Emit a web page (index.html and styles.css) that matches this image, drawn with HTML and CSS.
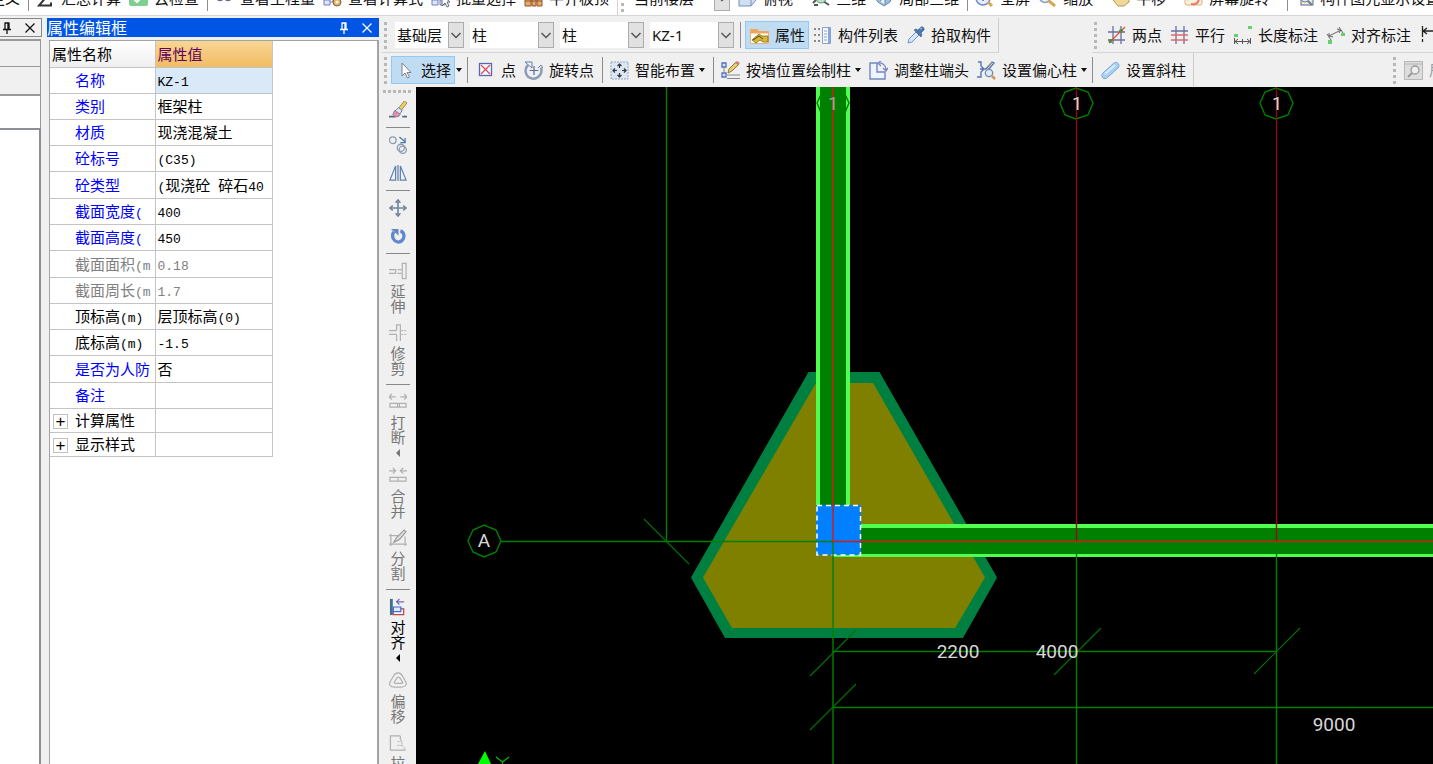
FILE: index.html
```html
<!DOCTYPE html>
<html lang="zh-CN">
<head>
<meta charset="utf-8">
<title>属性编辑框</title>
<link rel="stylesheet" href="styles.css">
</head>
<body>
<svg class="sprite" aria-hidden="true">
  <symbol id="i-sum" viewBox="0 0 19 19"><path d="M14 5V3H4l5 6.500-6 7h12v-3" fill="none" stroke="#333" stroke-width="2"/></symbol>
  <symbol id="i-cloud" viewBox="0 0 19 19"><rect width="19" height="17" rx="2" fill="#7fd08f"/><path d="M5 10l3 3 6-6" fill="none" stroke="#fff" stroke-width="2"/></symbol>
  <symbol id="i-glasses" viewBox="0 0 19 19"><g fill="#dfe8f4" stroke="#5f7196" stroke-width="1.500"><circle cx="5" cy="8" r="3.500"/><circle cx="13" cy="8" r="3.500"/></g></symbol>
  <symbol id="i-flow" viewBox="0 0 19 19"><path d="M1 1h6v6H1zM1 11h6v5H1z" fill="#dfe6f8" stroke="#6f80c0"/><path d="M7 13h5M10 5v8" stroke="#6f80c0"/><circle cx="14" cy="13" r="4" fill="#e8b060" stroke="#806040"/><circle cx="14" cy="13" r="1.500" fill="#fff"/></symbol>
  <symbol id="i-batch" viewBox="0 0 19 19"><path d="M1 1h6v6H1zM1 11h6v5H1zM9 11h5v5H9z" fill="#dfe6f8" stroke="#6f80c0"/><path d="M11 6v11l3-3 2 4 2-1-2-4h3z" fill="#fff" stroke="#667"/></symbol>
  <symbol id="i-slab" viewBox="0 0 19 19"><path d="M1 7h6v10H1zM8 4h4v13H8zM13 8h5v9h-5z" fill="#e0b060" stroke="#985038"/><path d="M1 12h17" stroke="#985038"/></symbol>
  <symbol id="i-cube" viewBox="0 0 19 19"><path d="M1 6l5-5h12v10l-5 6H1z" fill="#cfe0f4" stroke="#7890b8"/><path d="M1 6h12v11M13 6l5-5" fill="none" stroke="#7890b8"/></symbol>
  <symbol id="i-orbit" viewBox="0 0 19 19"><path d="M2 14l5-5M3 16h4M12 12l6 4" stroke="#555" stroke-width="2"/><circle cx="10" cy="9" r="5" fill="#bfe0d0" stroke="#58906c"/></symbol>
  <symbol id="i-part" viewBox="0 0 19 19"><path d="M1 9l8-6 9 4-2 6-6 4-6-4z" fill="#9cc0dc" stroke="#6788a8"/><path d="M6 12l5-4v8" fill="#e8f2f8" stroke="#6788a8"/></symbol>
  <symbol id="i-full" viewBox="0 0 19 19"><circle cx="8" cy="9" r="7" fill="#e4edfa" stroke="#7188bd" stroke-width="1.500"/><path d="M5 9h6M8 6v6" stroke="#7188bd" stroke-width="2"/><path d="M13 13l4 4" stroke="#d8a850" stroke-width="3"/></symbol>
  <symbol id="i-zoom" viewBox="0 0 19 19"><circle cx="7" cy="8" r="5.500" fill="#edf2f8" stroke="#90a0b8" stroke-width="1.500"/><path d="M11 12l6 5" stroke="#d8a850" stroke-width="3"/></symbol>
  <symbol id="i-hand" viewBox="0 0 19 19"><path d="M2 11l4-1V2h9l3 4v7l-5 4H7z" fill="#f0d898" stroke="#b89858"/></symbol>
  <symbol id="i-screen" viewBox="0 0 19 19"><rect x="1" y="2" width="17" height="14" rx="2" fill="#fff0d8" stroke="#d8b078"/><path d="M1 5l6 2-3 5z" fill="#73b9e8"/><path d="M7 14c6 1 7-2 7-6l-3 1 4-5 3 5-2-1c0 7-4 9-9 8z" fill="#e87870"/></symbol>
  <symbol id="i-show" viewBox="0 0 19 19"><rect x="6" y="4" width="12" height="12" fill="#f6e9c9" stroke="#55699a"/><circle cx="10" cy="9" r="4" fill="#e3edf8" stroke="#667da6"/><path d="M1 10h5M13 12l4 4" stroke="#667da6" stroke-width="2"/></symbol>

  <symbol id="i-pin" viewBox="0 0 12 12"><path d="M3.500 1h5M4 1v6M8 1v6M7 1v6M2 7.500h8M6 8v4" stroke="currentColor" stroke-width="1.300" fill="none"/></symbol>
  <symbol id="i-close" viewBox="0 0 12 12"><path d="M1.500 1.500l9 9M10.500 1.500l-9 9" stroke="currentColor" stroke-width="1.200" fill="none"/></symbol>
  <symbol id="i-chev" viewBox="0 0 12 12"><path d="M1.500 4L6 8.500 10.500 4" stroke="#555" stroke-width="1.500" fill="none"/></symbol>

  <symbol id="i-prop" viewBox="0 0 19 19"><path d="M.5 3.500h7l1 2h10v12H.5z" fill="#fff" stroke="#e8b078"/><path d="M.5 3h7l1 2h10v2.500H.5z" fill="#f0a858"/><path d="M2 14l7-6 3 2h6v6h-5l-3-2-4 3z" fill="#d8b838" stroke="#806818" stroke-width=".8"/><path d="M3 14l6-4 4 3" fill="none" stroke="#54440c"/></symbol>
  <symbol id="i-list" viewBox="0 0 19 19"><path d="M9.500 1.500h8v16h-8z" fill="#f4f8ff" stroke="#8aa0d0"/><path d="M15 2h2.500v15H15z" fill="#89a5d8"/><path d="M11 5h3M11 8h3M11 11h3M11 14h3" stroke="#8fa0c0"/><path d="M1 3h2M5 3h2M1 9h2M5 9h2M1 15h2M5 15h2" stroke="#888" stroke-width="2"/></symbol>
  <symbol id="i-drop" viewBox="0 0 19 19"><path d="M2 17l1-4 7-7 3 3-7 7z" fill="#d8e8fb" stroke="#7090c8"/><path d="M8 4l7 7 1-2-1-2 3-3c1-2-2-4-3-3l-3 3-2-1z" fill="#4b78ac" stroke="#375f94" stroke-width=".6"/><path d="M14 3l2-1" stroke="#a8c8e8"/></symbol>
  <symbol id="i-two" viewBox="0 0 19 19"><path d="M6 0v18M14 0v18M1 6h17M1 14h17" stroke="#6870a0" stroke-width="1.300"/><path d="M2 17L18 1" stroke="#e84840" stroke-width="1.300"/><circle cx="3.500" cy="15" r="2" fill="#60883c"/><circle cx="14" cy="5" r="2" fill="#60883c"/></symbol>
  <symbol id="i-par" viewBox="0 0 19 19"><path d="M6 0v18M14 0v18M1 5h17" stroke="#6870a0" stroke-width="1.300"/><path d="M1 9h17M1 14h17" stroke="#e06868" stroke-width="1.300"/></symbol>
  <symbol id="i-len" viewBox="0 0 19 19"><path d="M1 8h4v3H1zM15 0h4v3h-4z" fill="#68d068"/><path d="M1.500 12v6M17.500 12v6M2 15.500h15M5 13l-3 2.500L5 18M14 13l3 2.500-3 2.500M9.500 13v5" fill="none" stroke="#555"/></symbol>
  <symbol id="i-ali" viewBox="0 0 19 19"><path d="M2 14h4v4H2zM15 7h4v3h-4z" fill="#68d068"/><path d="M1 8l4 6M13 1l4 6M3 10l12-6M3 7v3l4 1M11 3l4 1-2 3" fill="none" stroke="#666"/></symbol>
  <symbol id="i-dim" viewBox="0 0 19 19"><path d="M3.500 0v11M3.500 13v3M4 5h15M8 2L4 5l4 3" fill="none" stroke="#222" stroke-width="1.300"/></symbol>

  <symbol id="i-cursor" viewBox="0 0 19 19"><path d="M6 2v13l3-3 2.500 5 2-1-2.500-4.500h4z" fill="#fff" stroke="#7c8088"/></symbol>
  <symbol id="i-point" viewBox="0 0 19 19"><rect x="3.500" y="2.500" width="12" height="12" fill="#f5f7ff" stroke="#5868b0" stroke-width="1.300"/><path d="M5 4l9 9M14 4l-9 9" stroke="#d85050" stroke-width="1.300"/></symbol>
  <symbol id="i-rotpt" viewBox="0 0 19 19"><path d="M4 4C0 8 1 16 8 17.500c6 1 11-5 9-11" fill="none" stroke="#8c9cb8" stroke-width="2.500"/><path d="M1 1h7v6z" fill="#eef4ff" stroke="#667ca6"/><path d="M10 5v9M5.500 9.500h9" stroke="#566c96" stroke-width="1.200"/><path d="M14 7l3-3 2 3" fill="none" stroke="#667ca6"/></symbol>
  <symbol id="i-smart" viewBox="0 0 19 19"><rect x="1" y="1" width="17" height="17" fill="#dce7f4" stroke="#90a4c0" stroke-dasharray="2 1"/><path d="M9.500 3v4M9.500 12v4M3 9.500h4M12 9.500h4M7.500 5l2-2 2 2M7.500 14l2 2 2-2M5 7.500l-2 2 2 2M14 7.500l2 2-2 2" fill="none" stroke="#333" stroke-width="1.200"/></symbol>
  <symbol id="i-wall" viewBox="0 0 19 19"><path d="M1 2h4v4H1zM1 12h4v4H1z" fill="#dce8ff" stroke="#5070c0" stroke-width="1.300"/><path d="M3 6v6M6 14h13M6 17.500h13" stroke="#888"/><path d="M7 12l1-4 7-7 3 2-7 7z" fill="#e8d070" stroke="#8a7840"/><path d="M14 2l2-2 3 2-2 2z" fill="#cf8070"/></symbol>
  <symbol id="i-end" viewBox="0 0 19 19"><path d="M1 2h7v9h8v7H1z" fill="#eef4ff" stroke="#7088c0" stroke-width="1.400"/><path d="M9 2c5-1 8 3 8 7M12 0L9 2l3 3M14 7l3 3 2-3" fill="none" stroke="#8088c8" stroke-width="1.400"/></symbol>
  <symbol id="i-ecc" viewBox="0 0 19 19"><path d="M1 1h3v4l3 3-3 3v5H0M9 8l6-7 2 1-6 7M3 8h6" fill="none" stroke="#5078b8" stroke-width="1.400"/><path d="M9 7l6-6" stroke="#c09050"/><circle cx="12" cy="12" r="3.700" fill="#dceafa" stroke="#758aa8" stroke-width="1.300"/><path d="M15 15l3 3" stroke="#d09850" stroke-width="2.500"/></symbol>
  <symbol id="i-slant" viewBox="0 0 19 19"><path d="M2 17c-2-2-1-4 0-5L13 2c2-2 7 1 4 5L7 16c-2 2-4 2-5 1z" fill="#a8d0f4" stroke="#78a4d4"/><path d="M4 13L14 4" stroke="#d8ecff" stroke-width="2"/></symbol>
  <symbol id="i-find" viewBox="0 0 19 19"><rect x=".5" y=".5" width="18" height="18" fill="#ddd" stroke="#b8b8b8"/><path d="M1 3h17" stroke="#b8b8b8"/><circle cx="11" cy="9" r="4" fill="#eee" stroke="#999" stroke-width="1.300"/><path d="M8 12l-4 4" stroke="#999" stroke-width="2"/></symbol>

  <symbol id="v-brush" viewBox="0 0 19 19"><path d="M0 16.500h7M14 16.500h5" stroke="#50688c" stroke-width="2"/><path d="M9 9l7-9 3 2-7 9z" fill="#f0d060" stroke="#807050" stroke-width=".8"/><path d="M6 11l4-4 4 3-3 4z" fill="#dde6f2" stroke="#6080a0"/><path d="M6 10l6 4-2 2.500H6L4 14z" fill="#e090b0" stroke="#906880" stroke-width=".8"/></symbol>
  <symbol id="v-copy" viewBox="0 0 19 19"><g fill="none" stroke="#8c9cb4" stroke-width="1.400"><circle cx="4" cy="4.500" r="3.500"/><circle cx="12.500" cy="12.500" r="3.800"/><circle cx="14.500" cy="14.500" r="3.800"/></g><path d="M11 1l6 5M17 2v5h-5" fill="none" stroke="#4878b0" stroke-width="1.300"/></symbol>
  <symbol id="v-mirror" viewBox="0 0 19 19"><path d="M7 2v15H1zM12 2v15h6z" fill="#edf3fc" stroke="#6080b0" stroke-width="1.300"/><path d="M9.500 1v17" stroke="#6080b0" stroke-width="1.300"/></symbol>
  <symbol id="v-move" viewBox="0 0 19 19"><path d="M9.500 1v17M1 9.500h17M7 4l2.500-3L12 4M7 15l2.500 3 2.500-3M4 7L1 9.500 4 12M15 7l3 2.500-3 2.500" fill="none" stroke="#6f87a3" stroke-width="1.700"/></symbol>
  <symbol id="v-rotate" viewBox="0 0 19 19"><path d="M12 4c4 1 5 7 2 10-5 5-13-1-9-9" fill="none" stroke="#6088cc" stroke-width="3.500"/><path d="M2 2h8v7z" fill="#6088cc"/></symbol>
  <symbol id="v-extend" viewBox="0 0 19 19"><path d="M14 1.500h4v16h-4zM0 8h7v4H0M9 8h4M9 12h4" fill="none" stroke="#b0b0b0" stroke-width="1.300"/></symbol>
  <symbol id="v-trim" viewBox="0 0 19 19"><path d="M8 7V1h4v17M8 11v7M0 7h8M0 11h8" fill="none" stroke="#b0b0b0" stroke-width="1.300"/><path d="M13 7h6M13 11h6" stroke="#aaa" stroke-dasharray="2 1"/></symbol>
  <symbol id="v-break" viewBox="0 0 19 19"><path d="M0 4h7M3 1L0 4l3 3M12 4h7M16 1l3 3-3 3M1 11h17v4H1zM9 11v4M11 11v4" fill="none" stroke="#b0b0b0" stroke-width="1.300"/></symbol>
  <symbol id="v-merge" viewBox="0 0 19 19"><path d="M0 4h7M4 1l3 3-3 3M12 4h7M15 1l-3 3 3 3M1 11h17v4H1zM9.500 11v4" fill="none" stroke="#b0b0b0" stroke-width="1.300"/></symbol>
  <symbol id="v-split" viewBox="0 0 19 19"><path d="M2 5v13M17 8v10M0 7h10M0 16h19" fill="none" stroke="#b0b0b0" stroke-width="1.300"/><path d="M5 14l3-5 8-8 2 2-7 8z" fill="#ddd" stroke="#999" stroke-width="1.200"/></symbol>
  <symbol id="v-align" viewBox="0 0 19 19"><path d="M1 1h3v17H1z" fill="#40708c"/><path d="M8 4h8M11 1L8 4l3 3" stroke="#7868b8" fill="none" stroke-width="1.300"/><path d="M4.500 11.500h11v6h-11z" fill="#fff" stroke="#b04848" stroke-width="1.300"/><path d="M4.500 9.500h8v5h-8z" fill="#e2eaff" stroke="#4068d8" stroke-width="1.300"/></symbol>
  <symbol id="v-offset" viewBox="0 0 19 19"><path d="M5 4c2-4 7-4 9 0l3 5c3 4 0 7-4 7H6c-5 0-7-3-4-7zM8 7c1-2 3-2 4 0l2 3c1 2 0 2-2 2H8c-3 0-3 0-2-2z" fill="none" stroke="#b0b0b0" stroke-width="1.300"/></symbol>
  <symbol id="v-stretch" viewBox="0 0 19 19"><path d="M12 2H1.500v15h16M12 2v4" fill="none" stroke="#b0b0b0" stroke-width="1.300"/><path d="M9 8h4M9 12h5M13 6l1 6 4 5" fill="none" stroke="#aaa" stroke-dasharray="2 1"/></symbol>
</svg>

<div class="app">
  <header class="menu-strip">
    <div class="menu-row">
      <button class="item cut-left">定义</button>
      <span class="sep"></span>
      <button class="item"><svg class="icon"><use href="#i-sum"/></svg>汇总计算</button>
      <button class="item"><svg class="icon"><use href="#i-cloud"/></svg>云检查</button>
      <span class="sep"></span>
      <button class="item"><svg class="icon"><use href="#i-glasses"/></svg>查看工程量</button>
      <button class="item"><svg class="icon"><use href="#i-flow"/></svg>查看计算式</button>
      <button class="item"><svg class="icon"><use href="#i-batch"/></svg>批量选择</button>
      <button class="item"><svg class="icon"><use href="#i-slab"/></svg>平齐板顶</button>
      <span class="edge"></span>
      <span class="grip"></span>
      <label class="combo floor"><select aria-label="楼层范围"><option>当前楼层</option></select><span class="combo-btn"><svg><use href="#i-chev"/></svg></span></label>
      <button class="item"><svg class="icon"><use href="#i-cube"/></svg>俯视<i class="caret"></i></button>
      <button class="item"><svg class="icon"><use href="#i-orbit"/></svg>三维</button>
      <button class="item"><svg class="icon"><use href="#i-part"/></svg>局部三维</button>
      <span class="sep"></span>
      <button class="item"><svg class="icon"><use href="#i-full"/></svg>全屏</button>
      <button class="item"><svg class="icon"><use href="#i-zoom"/></svg>缩放<i class="caret"></i></button>
      <button class="item"><svg class="icon"><use href="#i-hand"/></svg>平移<i class="caret"></i></button>
      <button class="item"><svg class="icon"><use href="#i-screen"/></svg>屏幕旋转<i class="caret"></i></button>
      <span class="sep"></span>
      <button class="item"><svg class="icon"><use href="#i-show"/></svg>构件图元显示设置</button>
    </div>
  </header>

  <div class="body">
    <aside class="dock">
      <div class="dock-title"><svg><use href="#i-pin"/></svg><svg><use href="#i-close"/></svg></div>
      <div class="dock-tab"></div>
      <div class="dock-tab"></div>
      <div class="dock-search"></div>
      <div class="dock-tree"></div>
    </aside>

    <section class="panel">
      <div class="panel-title">
        <h1>属性编辑框</h1>
        <button aria-label="固定"><svg><use href="#i-pin"/></svg></button>
        <button aria-label="关闭"><svg><use href="#i-close"/></svg></button>
      </div>
      <div class="panel-body">
        <table class="props">
          <thead><tr><th>属性名称</th><th class="value-head">属性值</th></tr></thead>
          <tbody>
            <tr class="selected"><th>名称</th><td><span class="mono">KZ-1</span></td></tr>
            <tr><th>类别</th><td>框架柱</td></tr>
            <tr><th>材质</th><td>现浇混凝土</td></tr>
            <tr><th>砼标号</th><td><span class="mono">(C35)</span></td></tr>
            <tr class="tall"><th>砼类型</th><td><span class="mono">(</span>现浇砼<span class="mono"> </span>碎石<span class="mono">40</span></td></tr>
            <tr><th>截面宽度<span class="mono">(</span></th><td><span class="mono">400</span></td></tr>
            <tr><th>截面高度<span class="mono">(</span></th><td><span class="mono">450</span></td></tr>
            <tr class="readonly tall"><th>截面面积<span class="mono">(m</span></th><td><span class="mono">0.18</span></td></tr>
            <tr class="readonly"><th>截面周长<span class="mono">(m</span></th><td><span class="mono">1.7</span></td></tr>
            <tr class="plain"><th>顶标高<span class="mono">(m)</span></th><td>层顶标高<span class="mono">(0)</span></td></tr>
            <tr class="plain"><th>底标高<span class="mono">(m)</span></th><td><span class="mono">-1.5</span></td></tr>
            <tr class="tall"><th>是否为人防</th><td>否</td></tr>
            <tr><th>备注</th><td></td></tr>
            <tr class="group"><th><button class="plus" aria-label="展开计算属性">+</button>计算属性</th><td></td></tr>
            <tr class="group"><th><button class="plus" aria-label="展开显示样式">+</button>显示样式</th><td></td></tr>
          </tbody>
        </table>
      </div>
    </section>

    <main class="work">
      <div class="bar-row">
        <div class="bar">
          <span class="grip"></span>
          <label class="combo short"><select aria-label="楼层"><option>基础层</option></select><span class="combo-btn"><svg><use href="#i-chev"/></svg></span></label>
          <label class="combo"><select aria-label="构件类别"><option>柱</option></select><span class="combo-btn"><svg><use href="#i-chev"/></svg></span></label>
          <label class="combo"><select aria-label="构件类型"><option>柱</option></select><span class="combo-btn"><svg><use href="#i-chev"/></svg></span></label>
          <label class="combo"><select aria-label="构件名称"><option>KZ-1</option></select><span class="combo-btn"><svg><use href="#i-chev"/></svg></span></label>
          <span class="sep tight"></span>
          <button class="item on"><svg class="icon"><use href="#i-prop"/></svg>属性</button>
          <button class="item first"><svg class="icon"><use href="#i-list"/></svg>构件列表</button>
          <button class="item"><svg class="icon"><use href="#i-drop"/></svg>拾取构件</button>
        </div>
        <div class="bar right axis">
          <span class="grip"></span>
          <button class="item wide"><svg class="icon"><use href="#i-two"/></svg>两点</button>
          <button class="item"><svg class="icon"><use href="#i-par"/></svg>平行</button>
          <button class="item"><svg class="icon"><use href="#i-len"/></svg>长度标注</button>
          <button class="item"><svg class="icon"><use href="#i-ali"/></svg>对齐标注</button>
          <button class="item" aria-label="标注"><svg class="icon"><use href="#i-dim"/></svg></button>
        </div>
      </div>
      <div class="bar-row">
        <div class="bar">
          <span class="grip"></span>
          <button class="item on"><svg class="icon"><use href="#i-cursor"/></svg>选择</button><i class="caret flush"></i>
          <span class="sep near"></span>
          <button class="item"><svg class="icon"><use href="#i-point"/></svg>点</button>
          <button class="item"><svg class="icon"><use href="#i-rotpt"/></svg>旋转点</button>
          <span class="sep"></span>
          <button class="item"><svg class="icon"><use href="#i-smart"/></svg>智能布置<i class="caret"></i></button>
          <span class="sep"></span>
          <button class="item"><svg class="icon"><use href="#i-wall"/></svg>按墙位置绘制柱<i class="caret"></i></button>
          <button class="item"><svg class="icon"><use href="#i-end"/></svg>调整柱端头</button>
          <button class="item"><svg class="icon"><use href="#i-ecc"/></svg>设置偏心柱<i class="caret"></i></button>
          <span class="sep near"></span>
          <button class="item"><svg class="icon"><use href="#i-slant"/></svg>设置斜柱</button>
        </div>
        <div class="bar right edit">
          <span class="grip"></span>
          <button class="item off"><svg class="icon"><use href="#i-find"/></svg>局</button>
        </div>
      </div>

      <div class="stage">
        <nav class="vbar">
          <span class="hgrip"></span>
          <button class="tool" aria-label="删除"><svg><use href="#v-brush"/></svg></button>
          <hr>
          <button class="tool" aria-label="复制"><svg><use href="#v-copy"/></svg></button>
          <button class="tool" aria-label="镜像"><svg><use href="#v-mirror"/></svg></button>
          <hr>
          <button class="tool" aria-label="移动"><svg><use href="#v-move"/></svg></button>
          <button class="tool" aria-label="旋转"><svg><use href="#v-rotate"/></svg></button>
          <hr>
          <button class="tool"><svg><use href="#v-extend"/></svg><span>延伸</span></button>
          <button class="tool"><svg><use href="#v-trim"/></svg><span>修剪</span></button>
          <hr>
          <button class="tool"><svg><use href="#v-break"/></svg><span>打断</span><i class="side"></i></button>
          <button class="tool"><svg><use href="#v-merge"/></svg><span>合并</span></button>
          <button class="tool"><svg><use href="#v-split"/></svg><span>分割</span></button>
          <hr>
          <button class="tool live"><svg><use href="#v-align"/></svg><span>对齐</span><i class="side"></i></button>
          <button class="tool"><svg><use href="#v-offset"/></svg><span>偏移</span></button>
          <button class="tool"><svg><use href="#v-stretch"/></svg><span>拉伸</span></button>
        </nav>
        <div class="canvas">
          <svg viewBox="416 87 1017 677" preserveAspectRatio="xMinYMin slice" role="img" aria-label="绘图区">
            <!-- footing -->
            <path d="M808.500 372h71L997 577.500 963 638H725l-34-60.500z" fill="#008040"/>
            <path d="M816 383h57L985 577.500 955 628H732l-29-50.500z" fill="#808000"/>
            <!-- axis bubbles -->
            <path class="axis-line" d="M1060 103l5-11 11-4 12 4 5 11-5 12-12 4-11-4zM1260 103l5-11 11-4 12 4 5 11-5 12-12 4-11-4zM468 541l5-11 11-5 12 5 5 11-5 11-12 5-11-5z"/>
            <!-- beams -->
            <path d="M816 87h34v430h-34z" fill="#50ff50"/><path d="M820 87h26v430h-26z" fill="#008000"/>
            <path d="M833 524h600v33H833z" fill="#50ff50"/><path d="M833 528h600v26H833z" fill="#008000"/>
            <path class="axis-line" d="M817 103l5-11 11-4 11 4 5 11-5 12-11 4-11-4z"/>
            <!-- column -->
            <path d="M816 505h45v50h-45z" fill="#0080ff"/>
            <path d="M817 505.500h43.500v49.500H817z" fill="none" stroke="#fff" stroke-width="1.500" stroke-dasharray="5 4"/>
            <!-- axes -->
            <path class="axis-line" d="M666.500 87v454M501 541.500h332M1076.500 541v223M1276.500 541v223M833 651.500h443M833 707.500h600M833 541v223"/>
            <path class="tick" d="M644 519l45 45M810 676l46-46M810 730l46-46M1054 675l47-47M1254 674l46-46"/>
            <path class="red-dim" d="M1076.500 87v454M1276.500 87v454"/>
            <path class="red-axis" d="M833 87v454.500h600"/>
            <g class="cad-text">
              <text x="833" y="110" class="mark dim">1</text>
              <text x="1077" y="110" class="mark">1</text>
              <text x="1277" y="110" class="mark">1</text>
              <text x="484" y="547">A</text>
              <text x="958" y="658">2200</text>
              <text x="1057" y="658">4000</text>
              <text x="1334" y="731">9000</text>
            </g>
            <!-- coordinate mark -->
            <path d="M485 751l6 13h-13z" fill="#0f0"/>
            <path d="M496 757l6.500 5 6.500-5M502.500 762v4" fill="none" stroke="#00c000" stroke-width="1.200"/>
          </svg>
        </div>
      </div>
    </main>
  </div>
</div>
</body>
</html>
```

FILE: styles.css
```css
* { box-sizing: border-box; }

body {
  margin: 0;
  background: #f0f0f0;
  color: #111;
  font: 15px/20px "Noto Sans", "Noto Sans CJK SC", sans-serif;
}

button, select {
  margin: 0;
  padding: 0;
  border: 0;
  background: none;
  color: inherit;
  font: inherit;
}

.sprite { position: absolute; width: 0; height: 0; }

.app {
  display: flex;
  flex-direction: column;
  height: 100vh;
  overflow: hidden;
}

/* menu strip, scrolled partly out of view */
.menu-strip {
  display: flex;
  flex: none;
  flex-direction: column;
  justify-content: flex-end;
  height: 16px;
  overflow: hidden;
  background: #fff;
  border-bottom: 1px solid #d4d4d4;
}
.menu-row {
  display: flex;
  flex: none;
  align-items: center;
  height: 34px;
}

.item {
  display: flex;
  flex: none;
  align-items: center;
  gap: 6px;
  margin-left: 8px;
  white-space: nowrap;
}
.item.cut-left { margin-left: -10px; }
.item.first { margin-left: 4px; }
.item.wide { margin-left: 10px; }
.item.on {
  height: 28px;
  margin-left: 4px;
  padding: 0 3px 0 4px;
  background: #c0dcf3;
  border: 1px solid #90c8f6;
}
.item.off { color: #999; }
.icon { flex: none; width: 19px; height: 19px; }

.sep {
  flex: none;
  width: 1px;
  height: 26px;
  margin: 0 -1px 0 8px;
  background: #8c8c8c;
}
.sep.tight { margin: 0 0 0 6px; }
.sep.near { margin: 0 0 0 5px; }
.edge { flex: none; width: 1px; height: 34px; margin: 0 3px 0 8px; background: #d4d4d4; }

.caret {
  flex: none;
  width: 0;
  margin-left: -2px;
  border: 3px solid transparent;
  border-top: 4px solid #111;
  border-bottom: 0;
}
.caret.flush { margin: 0 0 0 1px; }

.grip {
  flex: none;
  width: 3px;
  height: 27px;
  background: repeating-linear-gradient(#b8b8b8 0 3px, transparent 3px 6px);
}

.combo {
  display: flex;
  flex: none;
  width: 84px;
  height: 26px;
  margin-left: 6px;
  background: #fff;
}
.combo.short { width: 69px; margin-left: 8px; }
.combo.floor { width: 98px; margin-left: 8px; }
.combo select {
  flex: 1;
  min-width: 0;
  padding-left: 2px;
  appearance: none;
}
.combo-btn {
  display: flex;
  align-items: center;
  justify-content: center;
  width: 16px;
  background: #e1e1e1;
  border: 1px solid #adadad;
  pointer-events: none;
}
.combo-btn svg { flex: none; width: 12px; height: 12px; }

.body { display: flex; flex: 1; min-height: 0; padding-top: 2px; }

/* left dock */
.dock {
  display: flex;
  flex: none;
  flex-direction: column;
  width: 42px;
}
.dock-title {
  display: flex;
  align-items: center;
  justify-content: flex-end;
  gap: 11px;
  height: 19px;
  padding-right: 5px;
  border: 1px solid #888;
  border-left: 0;
}
.dock-title svg { width: 12px; height: 12px; }
.dock-tab {
  width: 41px;
  height: 28px;
  border: 1px solid #999;
  border-width: 0 1px 1px 0;
}
.dock-title + .dock-tab { margin-top: 2px; border-top-width: 2px; }
.dock-search {
  width: 41px;
  height: 33px;
  background: #fff;
  border: 1px solid #999;
  border-left: 0;
  border-bottom: 0;
}
.dock-tree {
  flex: 1;
  width: 41px;
  background: #fff;
  border: 2px solid #8c8f94;
  border-width: 2px 2px 0 0;
}

/* property panel */
.panel {
  display: flex;
  flex: none;
  flex-direction: column;
  width: 332px;
  margin-left: 5px;
}
.panel-title {
  display: flex;
  align-items: center;
  gap: 11px;
  height: 19px;
  padding: 0 6px 0 0;
  background: #0055e5;
  color: #fff;
}
.panel-title h1 { flex: 1; margin: 0; font-size: 16px; font-weight: 400; line-height: 18px; }
.panel-title button { display: flex; }
.panel-title svg { width: 12px; height: 12px; }
.panel-body {
  flex: 1;
  margin: 3px 0 0 2px;
  background: #fff;
  border: 1px solid #a0a4a8;
  border-width: 1px 2px 0 1px;
}

.props {
  width: 223px;
  border-collapse: collapse;
  table-layout: fixed;
  color: #000;
  line-height: 20px;
}
.props th, .props td {
  height: 26px;
  padding: 0 0 0 2px;
  overflow: hidden;
  border: 1px solid #c4c4c4;
  border-left: 0;
  font-weight: 400;
  text-align: left;
  white-space: nowrap;
}
.props thead th {
  width: 105px;
  background: linear-gradient(#fff, #efefef);
  border-top: 0;
}
.props thead .value-head {
  width: auto;
  background: linear-gradient(#f9d595, #f0bc60);
  color: #600060;
}
.props tbody th { padding-left: 25px; color: #00f; }
.props .selected td { background: #d9e9f7; }
.props .readonly th, .props .readonly td { color: #808080; }
.props .plain th, .props .group th { color: #000; }
.props .tall th, .props .tall td { height: 27px; }
.props .group th, .props .group td { height: 24px; }
.props .group th { padding-left: 3px; }
.mono { font: 13px/15px "Liberation Mono", monospace; }
.plus {
  width: 15px;
  height: 15px;
  margin-right: 7px;
  border: 1px solid #c0c0c0;
  font: 17px/12px "Liberation Sans", sans-serif;
  vertical-align: middle;
}

/* workspace */
.work {
  display: flex;
  flex: 1;
  flex-direction: column;
  min-width: 0;
  margin-left: 3px;
}
.bar-row { display: flex; flex: none; overflow: hidden; }
.bar {
  display: flex;
  flex: none;
  align-items: center;
  height: 35px;
  padding: 0 7px 0 2px;
  border-right: 1px solid #cfcfcf;
  border-bottom: 1px solid #d4d4d4;
}
.bar-row + .bar-row .bar { height: 34px; border-bottom: 0; }
.bar.right { margin-left: auto; padding-right: 0; border-right: 0; }
.axis { width: 341px; }
.edit { width: 42px; }

.stage { display: flex; flex: 1; min-height: 0; }
.vbar {
  display: flex;
  flex: none;
  flex-direction: column;
  align-items: center;
  width: 34px;
  padding-right: 2px;
  overflow: hidden;
}
.vbar hr {
  flex: none;
  width: 24px;
  height: 1px;
  margin: 3px 0;
  border: 0;
  background: #888;
}
.hgrip {
  flex: none;
  width: 30px;
  height: 3px;
  margin: 3px 0;
  background: repeating-linear-gradient(90deg, #b8b8b8 0 3px, transparent 3px 5px);
}
.tool {
  display: flex;
  flex: none;
  flex-direction: column;
  align-items: center;
  gap: 4px;
  padding: 5px 0;
  color: #777;
  line-height: 15px;
}
.tool svg { width: 18px; height: 18px; }
.tool span { width: 15px; }
.tool.live { color: #000; }
.side {
  width: 0;
  border: 4px solid transparent;
  border-right: 4px solid currentColor;
  border-left: 0;
}

.canvas { flex: 1; min-width: 0; overflow: hidden; background: #000; }
.canvas svg { display: block; width: 100%; height: 100%; }
.axis-line { fill: none; stroke: #008000; stroke-width: 1.4; }
.tick { stroke: #007000; stroke-width: 1.2; }
.red-dim { stroke: #a00010; stroke-width: 1.3; }
.red-axis { fill: none; stroke: #d81818; stroke-width: 1.4; }
.cad-text { fill: #d8d8d8; font: 19px Roboto, sans-serif; text-anchor: middle; }
.cad-text .mark { font-size: 18px; }
.cad-text .dim { fill: #a0a0a0; }
```
